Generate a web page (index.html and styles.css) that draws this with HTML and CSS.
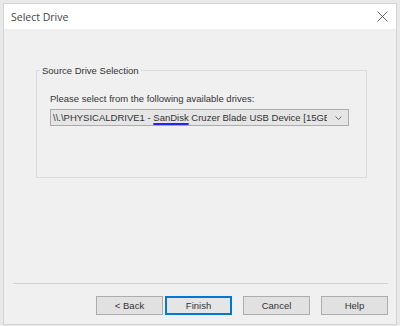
FILE: index.html
```html
<!DOCTYPE html>
<html lang="en">
<head>
  <meta charset="UTF-8">
  <title>Select Drive</title>
  <link rel="stylesheet" href="styles.css">
</head>
<body>
  <div class="window">
    <div class="title-bar">
      <span class="title">Select Drive</span>
      <svg class="close" width="11" height="11" viewBox="0 0 11 11">
        <path d="M0.5 0.5 L10.5 10.5 M10.5 0.5 L0.5 10.5" stroke="#666" stroke-width="1" fill="none"/>
      </svg>
    </div>

    <div class="content">
      <fieldset class="group">
        <legend>Source Drive Selection</legend>
        <div class="prompt">Please select from the following available drives:</div>
        <div class="combo">
          <span class="combo-text">\\.\PHYSICALDRIVE1 - <span class="spell">SanDisk</span> Cruzer Blade USB Device [15GB]</span>
          <svg class="chevron" width="7" height="4" viewBox="0 0 7 4">
            <path d="M0.5 0.5 L3.5 3.5 L6.5 0.5" stroke="#666" stroke-width="1" fill="none"/>
          </svg>
        </div>
      </fieldset>

      <div class="footer">
        <div class="separator"></div>
        <div class="buttons">
          <button class="btn">&lt; Back</button>
          <button class="btn default">Finish</button>
          <button class="btn spaced">Cancel</button>
          <button class="btn spaced">Help</button>
        </div>
      </div>
    </div>
  </div>
</body>
</html>
```

FILE: styles.css
```css
* {
  box-sizing: border-box;
  margin: 0;
  padding: 0;
}

body {
  background-color: #e9e9e9;
  font-family: 'Liberation Sans', Arial, sans-serif;
  font-size: 9.5px;
  color: #333;
}

.window {
  margin: 3px 0 0 3px;
  width: 394px;
  height: 322px;
  border: 1px solid #d4d4d4;
  background: #f0f0f0;
  display: flex;
  flex-direction: column;
}

.title-bar {
  height: 25px;
  background: #fff;
  display: flex;
  align-items: center;
  justify-content: space-between;
  padding: 0 7px 0 7px;
}

.title {
  font-family: 'Open Sans', 'Noto Sans', sans-serif;
  font-size: 10.5px;
  color: #444;
}

.close {
  margin-right: 1px;
}

.content {
  flex: 1;
  display: flex;
  flex-direction: column;
}

.group {
  margin: 36px 0 0 32px;
  width: 331px;
  height: 113px;
  border: 1px solid #dcdcdc;
  padding: 17px 13px 0 13px;
}

.group legend {
  margin-left: -10px;
  padding: 0 2px;
  line-height: 11px;
  color: #333;
}

.prompt {
  line-height: 12px;
}

.combo {
  margin-top: 4px;
  width: 299px;
  height: 17px;
  border: 1px solid #acacac;
  background: #e5e5e5;
  display: flex;
  align-items: center;
  padding: 0 6px 0 2px;
}

.combo-text {
  flex: 1;
  white-space: nowrap;
  overflow: hidden;
  line-height: 15px;
}

.spell {
  text-decoration: underline;
  text-decoration-color: #2323ff;
  text-decoration-thickness: 1.5px;
  text-underline-offset: 2px;
}

.chevron {
  margin-left: 8px;
}

.footer {
  margin-top: auto;
  padding-bottom: 9px;
}

.separator {
  margin-left: 9px;
  width: 375px;
  border-top: 1px solid #d2d2d2;
}

.buttons {
  margin-top: 12px;
  display: flex;
  justify-content: flex-end;
  padding-right: 8px;
}

.btn {
  width: 67px;
  height: 19px;
  border: 1px solid #adadad;
  background: #e1e1e1;
  font-family: 'Liberation Sans', Arial, sans-serif;
  font-size: 9.5px;
  color: #333;
}

.btn.default {
  margin-left: 2px;
  border-color: #0078d7;
  box-shadow: inset 0 0 0 1px #0078d7;
  background: #e5e5e5;
}

.btn.spaced {
  margin-left: 11px;
}
```
